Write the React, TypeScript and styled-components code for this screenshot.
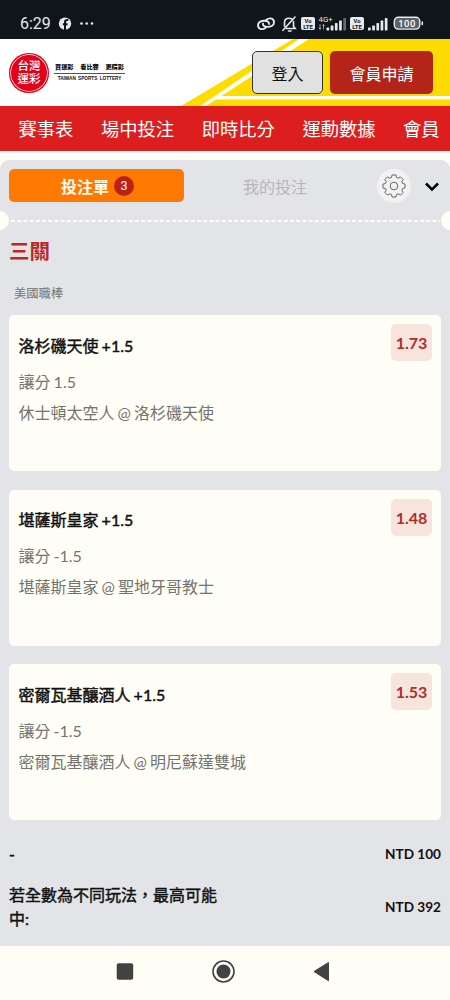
import React from "react";
import styled, { createGlobalStyle } from "styled-components";

const Global = createGlobalStyle`
  * { box-sizing: border-box; }
  body { margin: 0; background: #fffef6; font-family: Lato, "Noto Sans CJK TC", sans-serif; color: #111; }
`;
const Screen = styled.div`
  width: 450px; height: 1000px; overflow: hidden; display: flex; flex-direction: column; background: #fffef6;
`;
const StatusBar = styled.div`
  height: 39px; flex: none; background: #0f151a; color: #e6eaec; display: flex; align-items: flex-end;
  justify-content: space-between; padding: 0 26px 5px 20px; font-family: Roboto, sans-serif; font-size: 16px;
`;
const StatusGroup = styled.div`display: flex; align-items: center; height: 20px;`;
const Clock = styled.span`width: 38px; line-height: 20px; white-space: nowrap;`;
const Header = styled.header`
  height: 67px; flex: none; position: relative; background: #fff; display: flex; align-items: center; padding: 0 17px 0 9px;
`;
const Stripes = styled.svg`position: absolute; left: 0; top: 0;`;
const Logo = styled.div`position: relative; display: flex; align-items: center; gap: 5px; flex: 1;`;
const Seal = styled.div`
  width: 40px; height: 40px; border-radius: 50%; background: #e3001b; color: #fff; display: grid; place-content: center;
  box-shadow: inset 0 0 0 1.3px #e3001b, inset 0 0 0 2px #fff; font-size: 11.6px; line-height: 12.4px; font-weight: 500; text-align: center;
`;
const Slogan = styled.div`width: 71px; display: flex; flex-direction: column; color: #111;`;
const SloganTop = styled.div`
  display: flex; justify-content: space-between; padding: 0 1px; font-size: 6.2px; line-height: 8px; font-weight: 900;
  border-bottom: 1px solid #555; height: 11px; white-space: nowrap;
`;
const SloganBottom = styled.div`
  font-family: "Liberation Sans", sans-serif; font-size: 4.7px; line-height: 9px; font-weight: 700; text-align: center; white-space: nowrap;
  word-spacing: 1px;
`;
const HeaderButton = styled.button<{ $primary?: boolean }>`
  position: relative; height: 43px; width: ${p => (p.$primary ? 103 : 71)}px; margin-left: ${p => (p.$primary ? 7 : 0)}px; padding: 0;
  border: ${p => (p.$primary ? "0" : "1px solid #333")}; border-radius: 5px; background: ${p => (p.$primary ? "#b32519" : "#e1e1e1")};
  color: ${p => (p.$primary ? "#fff" : "#111")}; font: 16px Lato, "Noto Sans CJK TC", sans-serif;
`;
const Nav = styled.nav`
  height: 45px; flex: none; background: #dc1f1e; color: #fff; display: flex; align-items: center; gap: 27.6px; padding: 0 0 0 18.5px;
  font-size: 18.3px; white-space: nowrap; line-height: 24px;
`;
const Slip = styled.main`
  margin-top: 9px; height: 786px; background: #e3e4e7; border-radius: 9px 9px 0 0; display: flex; flex-direction: column;
`;
const Tabs = styled.div`height: 51px; padding: 0 9px; display: flex; align-items: center;`;
const ActiveTab = styled.div`
  width: 175px; height: 33px; border-radius: 5px; background: #ff7900; color: #fffef0; display: flex; align-items: center;
  justify-content: center; gap: 5px; font-size: 16px; font-weight: 700; padding-left: 2px;
`;
const Count = styled.span`
  width: 20px; height: 20px; border-radius: 50%; background: #bd2014; color: #fff; text-align: center; font: 12.5px/20px Roboto, sans-serif;
`;
const Tab = styled.div`width: 182px; text-align: center; font-size: 16px; color: #b6b7b9;`;
const Gear = styled.div`
  width: 34px; height: 34px; border-radius: 50%; background: #f2f2f2; margin: 0 13px 0 11px; display: grid; place-items: center;
`;
const Perforation = styled.div`height: 19px; display: flex; align-items: center; justify-content: space-between; overflow: hidden;`;
const Notch = styled.i<{ $right?: boolean }>`
  width: 19px; height: 19px; flex: none; border-radius: 50%; background: #fffef6; margin: ${p => (p.$right ? "0 -10px 0 0" : "0 0 0 -10px")};
`;
const Dots = styled.svg`flex: 1;`;
const Title = styled.h1`margin: 4px 0 0 9px; font-size: 20.5px; line-height: 34px; color: #b92a27; font-weight: 700;`;
const League = styled.div`margin: 15px 0 10px 14px; font-size: 12.3px; line-height: 22px; color: #747474; height: 22px; flex: none;`;
const Cards = styled.div`display: flex; flex-direction: column; gap: 18.5px; padding: 0 9px;`;
const Card = styled.section`
  height: 156px; border-radius: 5px; background: #fffef6; padding: 9px 9px 0 9.5px; display: flex; justify-content: space-between;
`;
const Selection = styled.div`font-size: 16px; padding-top: 5.5px; word-spacing: -1px;`;
const Pick = styled.div`line-height: 31px; color: #111; -webkit-text-stroke: 0.45px #111; margin-bottom: 5px;`;
const Detail = styled.div`line-height: 31px; color: #74746f;`;
const Odds = styled.div`
  width: 41px; height: 37px; border-radius: 5px; background: #f6e4dd; color: #b02d29; font-size: 16px; line-height: 37px; font-weight: 700; text-align: center;
`;
const Total = styled.div<{ $tall?: boolean }>`
  display: flex; justify-content: space-between; align-items: center; padding: 0 9px; height: ${p => (p.$tall ? 48 : 26)}px;
  margin-top: ${p => (p.$tall ? 16 : 21)}px; font-size: 16px; line-height: 24px; -webkit-text-stroke: 0.45px #111;
`;
const Label = styled.span`width: 212px;`;
const Amount = styled.span`font-size: 13.6px; -webkit-text-stroke: 0; font-weight: 700;`;
const SystemNav = styled.footer`height: 54px; flex: none; background: #fffef6; display: flex; justify-content: center;`;

const picks = [
  { pick: "洛杉磯天使 +1.5", line: "讓分 1.5", match: "休士頓太空人 @ 洛杉磯天使", odds: "1.73" },
  { pick: "堪薩斯皇家 +1.5", line: "讓分 -1.5", match: "堪薩斯皇家 @ 聖地牙哥教士", odds: "1.48" },
  { pick: "密爾瓦基釀酒人 +1.5", line: "讓分 -1.5", match: "密爾瓦基釀酒人 @ 明尼蘇達雙城", odds: "1.53" },
];

const gearPath = (() => {
  const pts: string[] = [];
  for (let i = 0; i < 8; i++) {
    [[-0.3, 8.8], [-0.17, 11.2], [0.17, 11.2], [0.3, 8.8]].forEach(([da, r]) => {
      const a = (i * Math.PI) / 4 + da;
      pts.push(`${(12 + r * Math.cos(a)).toFixed(2)} ${(12 + r * Math.sin(a)).toFixed(2)}`);
    });
  }
  return `M${pts.join("L")}Z`;
})();

const VoLte = ({ x }: { x: number }) => (
  <g transform={`translate(${x} 0)`}>
    <rect x="0" y="3" width="14" height="13" rx="2" fill="#e6eaec" />
    <text x="7" y="9" fontSize="5.8" fontWeight="700" textAnchor="middle" fill="#0f151a">Vo</text>
    <text x="7" y="14.8" fontSize="6" fontWeight="700" textAnchor="middle" fill="#0f151a">LTE</text>
  </g>
);
const Signal = ({ x, weak }: { x: number; weak?: boolean }) => (
  <g fill="#e6eaec">
    {[3, 5, 7.5, 10, 12.5].map((h, i) => (
      <rect key={i} x={x + i * 4.2} y={16.5 - h} width="2.7" height={h} rx="0.7" opacity={weak && i === 4 ? 0.4 : 1} />
    ))}
  </g>
);

export default function App() {
  return (
    <Screen>
      <Global />
      <StatusBar>
        <StatusGroup>
          <Clock>6:29</Clock>
          <svg width="36" height="20" viewBox="0 0 36 20">
            <circle cx="7" cy="9.6" r="6.2" fill="#e6eaec" />
            <path d="M7 16V8.4q0-2.3 2.3-2.3h1M4.8 10.2h4.800" fill="none" stroke="#0f151a" strokeWidth="2" />
            <circle cx="23.5" cy="9.5" r="1.3" fill="#e6eaec" /><circle cx="28.7" cy="9.5" r="1.3" fill="#e6eaec" /><circle cx="34" cy="9.5" r="1.3" fill="#e6eaec" />
          </svg>
        </StatusGroup>
        <svg width="167" height="20" viewBox="0 0 167 20" fontFamily="Roboto, sans-serif">
          <g fill="none" stroke="#e6eaec" strokeLinecap="round">
            <path d="M8.800 13.800C4.500 16.600 1 14.600 1 11.300 1 8.300 4 6.700 7.500 6.700c3.200 0 4.800 1.500 4.500 3.300" strokeWidth="1.900" />
            <path d="M9.200 5.800C13.500 3 17 4.800 17 8.200c0 3-3 4.700-6.500 4.700-3.200 0-4.800-1.500-4.500-3.300" strokeWidth="1.900" />
            <path d="M27.500 12.200V8.500c0-2.700 2-4.300 4.500-4.300 1 0 1.800.2 2.500.7M36.500 7.500v4.700l1.700 2.300H29.500M31.500 17h2.500M38 3 26 16.300" strokeWidth="1.600" />
          </g>
          <VoLte x={44} />
          <text x="61.500" y="7.700" fontSize="7.800" fill="#e6eaec">4G+</text>
          <path d="M63 10v5m-1-1.500 1 2 1-2M66.500 15.500v-5l-1 1.500m1-1.500 1 1.500" stroke="#e6eaec" strokeWidth=".6" fill="none" />
          <Signal x={69.500} weak />
          <VoLte x={93} />
          <Signal x={111} />
          <rect x="137.300" y="3.300" width="25.500" height="11.800" rx="4" fill="#5d6265" stroke="#e6eaec" strokeWidth="1.400" />
          <text x="150" y="12.500" fontSize="9.500" fontWeight="500" letterSpacing=".4" textAnchor="middle" fill="#fff">100</text>
          <rect x="164.500" y="7.200" width="1.600" height="4" rx=".8" fill="#e6eaec" />
        </svg>
      </StatusBar>
      <Header>
        <Stripes width="450" height="67" viewBox="0 0 450 67">
          <path d="M293 0H450V67H181Z" fill="#ffdc00" />
          <path d="M299 0 200 67H206L309 0Z" fill="#fffef6" />
          <path d="M216 57H450V60.500H210Z" fill="#fffef6" />
        </Stripes>
        <Logo>
          <Seal>台灣<br />運彩</Seal>
          <Slogan>
            <SloganTop><span>買運彩</span><span>看比賽</span><span>更精彩</span></SloganTop>
            <SloganBottom>TAIWAN SPORTS LOTTERY</SloganBottom>
          </Slogan>
        </Logo>
        <HeaderButton>登入</HeaderButton>
        <HeaderButton $primary>會員申請</HeaderButton>
      </Header>
      <Nav><span>賽事表</span><span>場中投注</span><span>即時比分</span><span>運動數據</span><span>會員</span></Nav>
      <Slip>
        <Tabs>
          <ActiveTab>投注單<Count>3</Count></ActiveTab>
          <Tab>我的投注</Tab>
          <Gear>
            <svg width="24" height="24" viewBox="0 0 24 24" fill="none" stroke="#666" strokeWidth="1" strokeLinejoin="round">
              <path d={gearPath} /><circle cx="12" cy="12" r="3.800" />
            </svg>
          </Gear>
          <svg width="16" height="12" viewBox="0 0 16 12"><path d="m2 3.500 6 6 6-6" fill="none" stroke="#000" strokeWidth="2.500" /></svg>
        </Tabs>
        <Perforation>
          <Notch />
          <Dots height="4" width="431"><path d="M2 2H431" stroke="#fffef6" strokeWidth="2" strokeDasharray="4 2.200" /></Dots>
          <Notch $right />
        </Perforation>
        <Title>三關</Title>
        <League>美國職棒</League>
        <Cards>
          {picks.map(p => (
            <Card key={p.pick}>
              <Selection><Pick>{p.pick}</Pick><Detail>{p.line}</Detail><Detail>{p.match}</Detail></Selection>
              <Odds>{p.odds}</Odds>
            </Card>
          ))}
        </Cards>
        <Total><Label>-</Label><Amount>NTD 100</Amount></Total>
        <Total $tall><Label>若全數為不同玩法，最高可能中:</Label><Amount>NTD 392</Amount></Total>
      </Slip>
      <SystemNav>
        <svg width="450" height="54" viewBox="0 0 450 54" fill="#424242">
          <rect x="116.700" y="17.300" width="16.500" height="16.500" rx="2" />
          <circle cx="223.500" cy="25.500" r="10.500" fill="none" stroke="#424242" strokeWidth="1.600" /><circle cx="223.500" cy="25.500" r="7" />
          <path d="M314 25.500 328.500 16.500V34.800Z" stroke="#424242" strokeLinejoin="round" />
        </svg>
      </SystemNav>
    </Screen>
  );
}
